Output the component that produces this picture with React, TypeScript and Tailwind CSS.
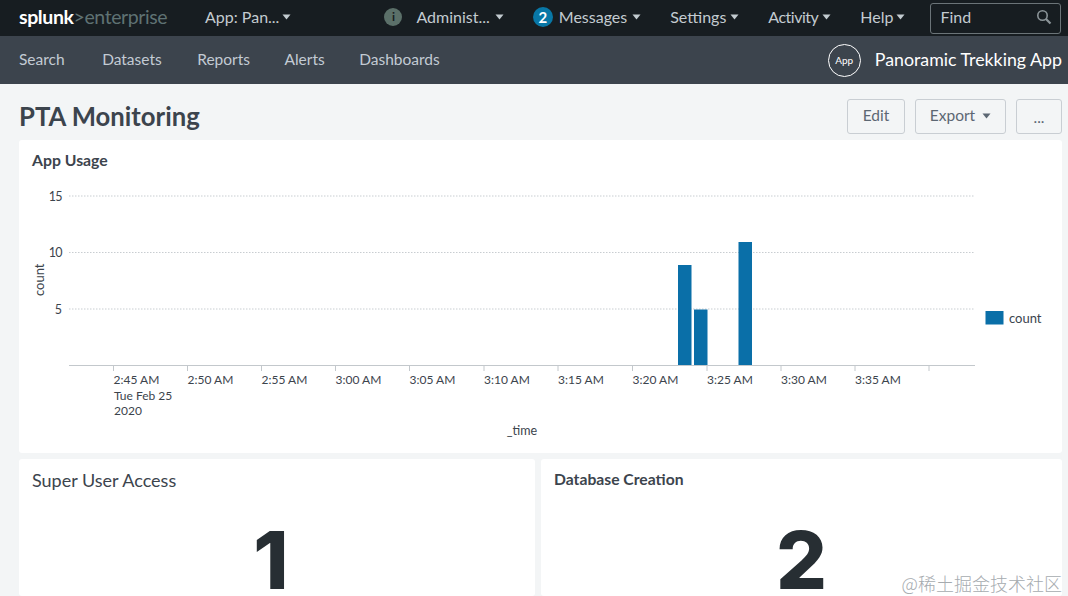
const FONT = "font-['Lato','Open_Sans',sans-serif]";

const TICK_LABELS = ["2:45 AM", "2:50 AM", "2:55 AM", "3:00 AM", "3:05 AM", "3:10 AM", "3:15 AM", "3:20 AM", "3:25 AM", "3:30 AM", "3:35 AM"];
const TICK_XS = [113.5, 187.5, 261.5, 335.5, 409.5, 484, 558, 632.5, 707, 781, 855, 929];

function Caret({ className = "" }: { className?: string }) {
  return (
    <svg width="9" height="6" viewBox="0 0 9 6" className={`shrink-0 ${className}`}>
      <path d="M0.5 0.5 L8.5 0.5 L4.5 5.5 Z" fill="currentColor" />
    </svg>
  );
}

function TopBar() {
  return (
    <div className="flex h-9 items-center whitespace-nowrap bg-[#171d21] pb-0.5 pl-[19px] text-[16px] text-[#c3cbd0]">
      <div className="w-[186px] shrink-0 text-[19.5px] leading-none tracking-[-0.4px]">
        <span className="font-bold text-white">splunk</span>
        <span className="text-[#5f7273]">&gt;enterprise</span>
      </div>
      <span>App: Pan...</span>
      <Caret className="ml-[3px]" />
      <div className="ml-[93px] flex h-[18px] w-[18px] shrink-0 items-center justify-center rounded-full bg-[#5b7069] text-[12px] font-bold text-[#171d21]">
        i
      </div>
      <span className="ml-[14px]">Administ...</span>
      <Caret className="ml-[5px]" />
      <div className="ml-[29px] flex h-5 w-5 shrink-0 items-center justify-center rounded-full bg-[#0877a6] text-[15px] font-bold text-white">
        2
      </div>
      <span className="ml-1.5">Messages</span>
      <Caret className="ml-[5px]" />
      <span className="ml-[29px]">Settings</span>
      <Caret className="ml-[4px]" />
      <span className="ml-[29px] tracking-[-0.5px]">Activity</span>
      <Caret className="ml-[4px]" />
      <span className="ml-[29px]">Help</span>
      <Caret className="ml-[3px]" />
      <div className="ml-[25px] mt-0.5 flex h-[31px] w-[131px] shrink-0 items-center justify-between rounded-[3px] border border-[#6b7478] pb-0.5 pl-[9px] pr-2">
        <span>Find</span>
        <svg width="16" height="16" viewBox="0 0 16 16" fill="none" stroke="#8b9498" strokeWidth="1.6">
          <circle cx="6.5" cy="6.5" r="4.7" />
          <path d="M10 10 L14.5 14.5" strokeWidth="2.2" />
        </svg>
      </div>
    </div>
  );
}

function AppBar() {
  return (
    <div className="flex h-12 items-center justify-between bg-[#3c444d] pl-[19px] pr-1.5 text-[#c3cbd4]">
      <div className="flex text-[15.5px]">
        <span>Search</span>
        <span className="ml-[37.5px]">Datasets</span>
        <span className="ml-[35.5px]">Reports</span>
        <span className="ml-[34.5px]">Alerts</span>
        <span className="ml-[34.5px]">Dashboards</span>
      </div>
      <div className="flex items-center gap-3.5">
        <div className="flex h-[33px] w-[33px] items-center justify-center rounded-full border-[1.5px] border-white text-[10px] text-white">
          App
        </div>
        <span className="pb-0.5 text-[17.8px] text-white">Panoramic Trekking App</span>
      </div>
    </div>
  );
}

function TitleRow() {
  return (
    <div className="flex h-[56px] items-center justify-between pl-[19px] pr-1.5 pt-[8px]">
      <h1 className="text-[25.7px] font-bold text-[#3c444d]">PTA Monitoring</h1>
      <div className="flex items-center text-[15.5px] text-[#5c6773]">
        <button className="h-[35px] w-[58px] rounded-[3px] border border-[#c9ced3]">Edit</button>
        <button className="ml-2.5 flex h-[35px] w-[91px] items-center justify-center gap-[7px] rounded-[3px] border border-[#c9ced3]">
          Export
          <Caret />
        </button>
        <button className="ml-2.5 h-[35px] w-[46px] rounded-[3px] border border-[#c9ced3] pt-1">...</button>
      </div>
    </div>
  );
}

function UsageChart() {
  const text = "#3c444d";
  return (
    <svg width="1043" height="273" viewBox="19 180 1043 273" className="block" fontFamily="Lato, 'Open Sans', sans-serif" fontSize="12" fill={text}>
      {[196, 252.5, 309].map((y) => (
        <line key={y} x1="69" x2="975" y1={y} y2={y} stroke="#c8cdd1" strokeDasharray="1.5 1.5" />
      ))}
      <text x="62" y="201" textAnchor="end" fontSize="12.5" letterSpacing="-0.6">15</text>
      <text x="62" y="257" textAnchor="end" fontSize="12.5" letterSpacing="-0.6">10</text>
      <text x="62" y="314" textAnchor="end" fontSize="12.5">5</text>
      <text transform="translate(44 296) rotate(-90)" fontSize="13">count</text>

      <rect x="678" y="265" width="13.5" height="100" fill="#0a6fa8" />
      <rect x="694" y="309.5" width="13.5" height="55.5" fill="#0a6fa8" />
      <rect x="738.5" y="242" width="13.5" height="123" fill="#0a6fa8" />

      <line x1="69" x2="975" y1="365.5" y2="365.5" stroke="#c3c8cc" />
      {TICK_XS.map((x) => (
        <line key={x} x1={x} x2={x} y1="365" y2="371" stroke="#c3c8cc" />
      ))}
      {TICK_LABELS.map((label, i) => (
        <text key={label} x={TICK_XS[i]} y="384">{label}</text>
      ))}
      <text x="114" y="399.5">Tue Feb 25</text>
      <text x="114" y="415">2020</text>
      <text x="522" y="435" textAnchor="middle" fontSize="12.5">_time</text>

      <rect x="985.5" y="311" width="18" height="13.5" fill="#0a6fa8" />
      <text x="1009" y="323" fontSize="13">count</text>
    </svg>
  );
}

export default function App() {
  return (
    <div className={`relative h-[596px] w-[1068px] overflow-hidden bg-[#f3f5f6] ${FONT}`}>
      <TopBar />
      <AppBar />
      <TitleRow />
      <div className="ml-[19px] mr-1.5 h-[313px] rounded-[3px] bg-white">
        <div className="h-10 pl-[13px] pt-[8px] text-[15.8px] font-bold text-[#3c444d]">App Usage</div>
        <UsageChart />
      </div>
      <div className="ml-[19px] mr-1.5 mt-1.5 flex gap-1.5">
        <div className="h-[137px] w-[516px] rounded-[3px] bg-white pl-[13px] pt-[8px]">
          <div className="text-[18px] leading-[27px] text-[#3c444d]">Super User Access</div>
          <div className="-ml-[13px] mt-[37px] pr-[12px] text-center font-['Inter',sans-serif] text-[80px] font-extrabold leading-[58px] text-[#272e33]">1</div>
        </div>
        <div className="h-[137px] flex-1 rounded-[3px] bg-white pl-[13px] pt-[8px]">
          <div className="text-[15.7px] leading-6 font-bold text-[#3c444d]">Database Creation</div>
          <div className="-ml-[13px] mt-[40px] text-center font-['Inter',sans-serif] text-[80px] font-extrabold leading-[58px] text-[#272e33]">2</div>
        </div>
      </div>
      <div className="absolute bottom-[1px] right-1.5 font-['Noto_Sans_CJK_SC',sans-serif] text-[18px] leading-6 font-light text-[#a6abaf]">
        @稀土掘金技术社区
      </div>
    </div>
  );
}
